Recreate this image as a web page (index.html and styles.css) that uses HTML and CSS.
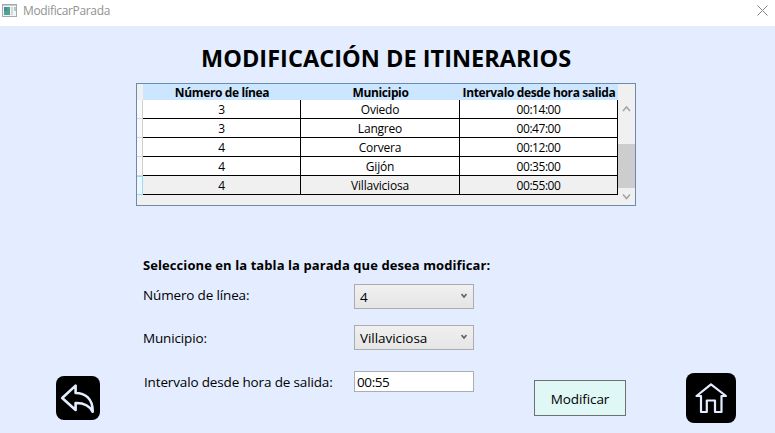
FILE: index.html
```html
<!DOCTYPE html>
<html lang="es">
<head>
<meta charset="utf-8">
<title>ModificarParada</title>
<link rel="stylesheet" href="styles.css">
</head>
<body>
<header class="titlebar">
  <svg class="app-icon" width="15" height="13" viewBox="0 0 15 13">
    <rect x=".5" y=".5" width="14" height="12" fill="#f4f4f4" stroke="#a4a9ad"/>
    <path d="M1 1.5h13" stroke="#c9cdd1"/>
    <rect x="2" y="3" width="6" height="8" fill="#4fa58c"/>
    <path d="M2 3h3v4H2z" fill="#4b86a8"/>
    <rect x="9" y="3" width="2" height="8" fill="#d5d9dd"/>
    <rect x="12" y="3" width="2" height="4" fill="#a9cfc5"/>
  </svg>
  <span class="window-name">ModificarParada</span>
  <svg class="close" width="11" height="11" viewBox="0 0 11 11"><path d="M.5 .5l10 10M10.5 .5l-10 10" stroke="#858585"/></svg>
</header>
<main>
  <h1>MODIFICACIÓN DE ITINERARIOS</h1>
  <section class="datagrid">
    <div class="row head"><i></i><b>Número de línea</b><b>Municipio</b><b>Intervalo desde hora salida</b></div>
    <div class="row"><i></i><span>3</span><span>Oviedo</span><span class="time">00:14:00</span></div>
    <div class="row"><i></i><span>3</span><span>Langreo</span><span class="time">00:47:00</span></div>
    <div class="row"><i></i><span>4</span><span>Corvera</span><span class="time">00:12:00</span></div>
    <div class="row"><i></i><span>4</span><span>Gijón</span><span class="time">00:35:00</span></div>
    <div class="row selected"><i></i><span>4</span><span>Villaviciosa</span><span class="time">00:55:00</span></div>
    <div class="scrollbar">
      <svg width="17" height="17" viewBox="0 0 17 17"><path d="M5 11l3.500-4 3.500 4" fill="none" stroke="#a3a3a3" stroke-width="1.500"/></svg>
      <div class="thumb"></div>
      <svg width="17" height="17" viewBox="0 0 17 17"><path d="M5 6.500l3.500 4 3.500-4" fill="none" stroke="#a3a3a3" stroke-width="1.500"/></svg>
    </div>
  </section>
  <div class="lower">
    <button class="icon-button back" aria-label="Volver">
      <svg width="44" height="44" viewBox="0 0 44 44"><path d="M6.200 22L19.600 9.600V17C29 17 37 22.500 36.700 35.800C33.500 29.500 28 26.800 19.600 27V34Z" fill="none" stroke="#e3edff" stroke-width="2.600" stroke-linejoin="round"/></svg>
    </button>
    <form class="form">
      <h2>Seleccione en la tabla la parada que desea modificar:</h2>
      <div class="field f1"><label>Número de línea:</label><div class="combo"><span>4</span><svg width="6" height="6" viewBox="0 0 6 6"><path d="M.5 1L3 4 5.500 1" fill="none" stroke="#606060" stroke-width="1.600"/></svg></div></div>
      <div class="field f2"><label>Municipio:</label><div class="combo"><span>Villaviciosa</span><svg width="6" height="6" viewBox="0 0 6 6"><path d="M.5 1L3 4 5.500 1" fill="none" stroke="#606060" stroke-width="1.600"/></svg></div></div>
      <div class="field f3"><label>Intervalo desde hora de salida:</label><div class="textbox">00:55</div></div>
    </form>
    <button class="submit">Modificar</button>
    <button class="icon-button home" aria-label="Inicio">
      <svg width="50" height="50" viewBox="0 0 50 50"><path d="M25 11.300L10.500 23H15V39H20.800V27.500H29V39H35.500V23H40Z" fill="none" stroke="#e3edff" stroke-width="2.200" stroke-linejoin="round"/></svg>
    </button>
  </div>
</main>
</body>
</html>
```

FILE: styles.css
```css
* { box-sizing: border-box; }
body { margin: 0; width: 775px; height: 433px; overflow: hidden; background: #e3edff; color: #000; font-family: "Open Sans", "Noto Sans", sans-serif; font-size: 13.5px; }
.titlebar { height: 26px; background: #fff; display: flex; align-items: flex-start; padding: 0 7px 0 2px; }
.app-icon { margin-top: 4px; }
.window-name { margin-left: 6px; font-size: 12px; line-height: 22px; letter-spacing: -.35px; color: #929292; }
.close { margin: 5px 0 0 auto; }
h1 { margin: 0; height: 57px; padding-left: 201px; font-size: 23.5px; font-weight: 700; line-height: 64px; white-space: nowrap; letter-spacing: .03px; }
.datagrid { position: relative; margin-left: 136px; width: 500px; height: 123px; border: 1px solid #688caf; background: #f0f0f0; font-size: 12px; }
.row { display: grid; grid-template-columns: 6px 158px 159px 158px; width: 481px; height: 19px; background: #fff; line-height: 20px; text-align: center; white-space: nowrap; }
.row > span { height: 19px; border-right: 1px solid #000; border-bottom: 1px solid #000; letter-spacing: -.2px; }
.row > .time { letter-spacing: -.45px; }
.row > i { height: 19px; border-right: 1px solid #d0d0d0; border-bottom: 1px solid #d8d8d8; background: #fafafa; }
.head { height: 16px; line-height: 17px; background: #cce6ff; letter-spacing: -.37px; }
.head > i { height: 16px; background: #f0f0f0; border: 0; }
.selected { background: #f0f0f0; }
.selected > i { border: 1px solid #99dcf5; border-left: 0; background: #eef8fc; }
.scrollbar { position: absolute; right: 0; top: 16px; width: 17px; height: 105px; display: flex; flex-direction: column; justify-content: space-between; }
.scrollbar svg { display: block; }
.thumb { height: 44px; margin-top: 27px; background: #cdcdcd; }
.lower { display: flex; height: 227px; align-items: flex-start; }
button { padding: 0; font: inherit; color: inherit; }
.icon-button { border: 0; background: #000; flex: none; }
.icon-button svg { display: block; }
.back { margin: 170px 0 0 56px; width: 44px; height: 44px; border-radius: 8px; }
.form { margin: 48px 0 0 43px; width: 331px; flex: none; white-space: nowrap; }
h2 { margin: 0; height: 30px; font-size: 13px; line-height: 22px; letter-spacing: .08px; }
.field { display: flex; justify-content: space-between; height: 25px; line-height: 23px; }
label { letter-spacing: -.15px; }
.f2 { margin-top: 16px; }
.f2 label { padding-top: 2px; }
.f3 { margin-top: 21px; }
.f3 label { padding-left: 1px; }
.combo { width: 120px; height: 25px; border: 1px solid #acacac; background: linear-gradient(#f0f0f0, #e5e5e5); display: flex; justify-content: space-between; align-items: center; padding: 0 6px 0 5px; line-height: 23px; letter-spacing: -.05px; }
.combo span { padding-top: 2px; }
.combo svg { margin-bottom: 2px; }
.textbox { width: 120px; height: 21px; border: 1px solid #abadb3; background: #fff; padding-left: 2px; line-height: 21px; letter-spacing: -.4px; }
.submit { margin: 174px 0 0 60px; width: 92px; height: 36px; padding-top: 2px; background: #dff8f5; border: 1px solid #707070; border-radius: 0; letter-spacing: -.1px; }
.home { margin: 167px 0 0 60px; width: 50px; height: 50px; border-radius: 8px; }
```
